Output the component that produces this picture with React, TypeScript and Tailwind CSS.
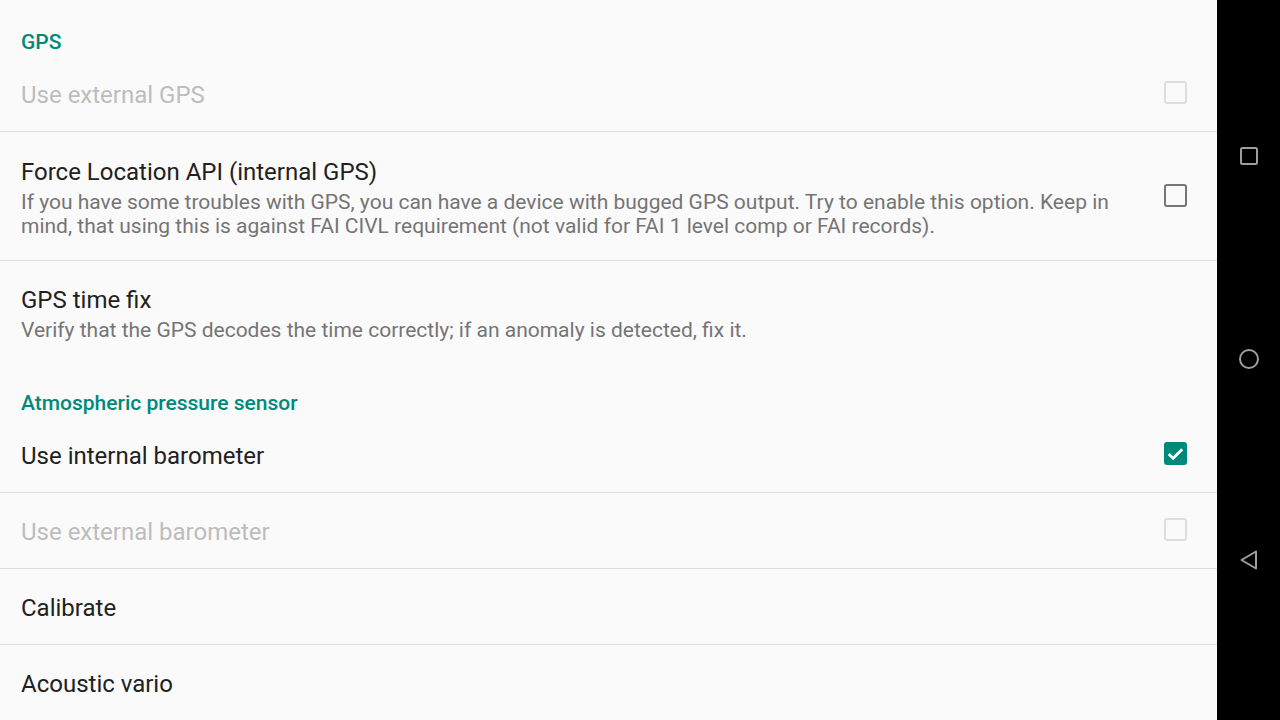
import type { ReactNode } from "react"

function Checkbox({ state }: { state: "on" | "off" | "disabled" }) {
  if (state === "on") {
    return (
      <div className="mb-[2px] flex h-[23px] w-[23px] items-center justify-center rounded-[3px] bg-[#00897b]">
        <svg width="19" height="19" viewBox="0 0 24 24" fill="none">
          <path d="M3.5 12.5l5.5 5.5L20.5 6.5" stroke="#fff" strokeWidth="3.6" />
        </svg>
      </div>
    )
  }
  return (
    <div
      className={[
        "mb-[2px] h-[23px] w-[23px] rounded-[3px] border-2",
        state === "off" ? "border-[#757575]" : "border-[#dedede]",
      ].join(" ")}
    />
  )
}

function Category({ children, className }: { children: ReactNode; className: string }) {
  return (
    <div className={`px-[21px] text-[21px] font-medium leading-[24px] text-[#00897b] ${className}`}>
      {children}
    </div>
  )
}

function Row({
  title,
  summary,
  disabled,
  check,
  divider = true,
  className = "",
}: {
  title: string
  summary?: string
  disabled?: boolean
  check?: "on" | "off" | "disabled"
  divider?: boolean
  className?: string
}) {
  return (
    <div
      className={[
        "flex shrink-0 items-center pl-[21px] pr-[30px]",
        divider ? "border-b border-[#dcdcdc]" : "",
        className,
      ].join(" ")}
    >
      <div className="flex-1 pr-[40px] pt-[3px]">
        <div className={`text-[24px] leading-[30px] ${disabled ? "text-[#bdbdbd]" : "text-[#212121]"}`}>
          {title}
        </div>
        {summary && <div className="mt-[3px] text-[21px] leading-[24px] text-[#757575]">{summary}</div>}
      </div>
      {check && <Checkbox state={check} />}
    </div>
  )
}

export default function App() {
  return (
    <div className="flex h-[720px] w-[1280px] overflow-hidden bg-[#fafafa] font-['Roboto',sans-serif]">
      <div className="flex w-[1217px] flex-col">
        <Category className="h-[55px] shrink-0 pt-[30px]">GPS</Category>
        <Row title="Use external GPS" disabled check="disabled" className="h-[77px]" />
        <Row
          title="Force Location API (internal GPS)"
          summary="If you have some troubles with GPS, you can have a device with bugged GPS output. Try to enable this option. Keep in mind, that using this is against FAI CIVL requirement (not valid for FAI 1 level comp or FAI records)."
          check="off"
          className="h-[129px]"
        />
        <Row
          title="GPS time fix"
          summary="Verify that the GPS decodes the time correctly; if an anomaly is detected, fix it."
          divider={false}
          className="h-[101px]"
        />
        <Category className="h-[54px] shrink-0 pt-[29px]">Atmospheric pressure sensor</Category>
        <Row title="Use internal barometer" check="on" className="h-[77px]" />
        <Row title="Use external barometer" disabled check="disabled" className="h-[76px]" />
        <Row title="Calibrate" className="h-[76px]" />
        <Row title="Acoustic vario" divider={false} className="h-[75px]" />
      </div>
      <div className="flex flex-1 flex-col items-center bg-black">
        <svg className="mt-[147px]" width="18" height="18" viewBox="0 0 18 18" fill="none">
          <rect x="1" y="1" width="16" height="16" rx="1.5" stroke="#9e9e9e" strokeWidth="2" />
        </svg>
        <svg className="mt-[183px]" width="22" height="22" viewBox="0 0 22 22" fill="none">
          <circle cx="11" cy="11" r="9" stroke="#9e9e9e" strokeWidth="2" />
        </svg>
        <svg className="mt-[180px]" width="20" height="20" viewBox="0 0 20 20" fill="none">
          <path d="M17 1.5v17L2.5 10z" stroke="#9e9e9e" strokeWidth="2" strokeLinejoin="round" />
        </svg>
      </div>
    </div>
  )
}
